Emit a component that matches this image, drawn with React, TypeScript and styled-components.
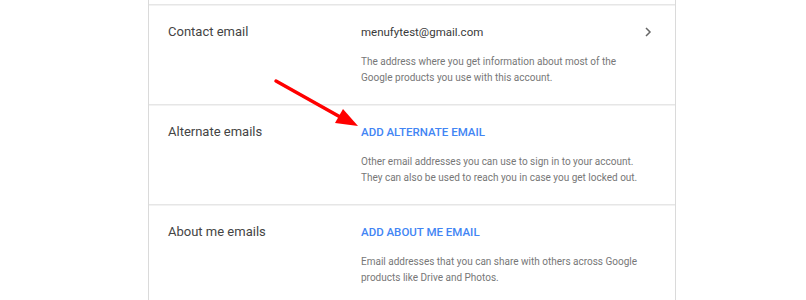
import React from 'react';
import styled, { createGlobalStyle } from 'styled-components';

type EmailRow = {
  label: string;
  value?: string;
  action?: string;
  description: string[];
  chevron?: boolean;
};

const rows: EmailRow[] = [
  {
    label: 'Contact email',
    value: 'menufytest@gmail.com',
    description: [
      'The address where you get information about most of the',
      'Google products you use with this account.',
    ],
    chevron: true,
  },
  {
    label: 'Alternate emails',
    action: 'ADD ALTERNATE EMAIL',
    description: [
      'Other email addresses you can use to sign in to your account.',
      'They can also be used to reach you in case you get locked out.',
    ],
  },
  {
    label: 'About me emails',
    action: 'ADD ABOUT ME EMAIL',
    description: [
      'Email addresses that you can share with others across Google',
      'products like Drive and Photos.',
    ],
  },
];

const GlobalStyle = createGlobalStyle`
  html, body {
    margin: 0;
    background: #fff;
  }
  body {
    font-family: Roboto, 'Liberation Sans', sans-serif;
  }
`;

const Page = styled.div`
  position: relative;
  width: 806px;
  height: 300px;
  overflow: hidden;
  padding-left: 148px;
  box-sizing: border-box;
`;

const Card = styled.section`
  width: 528px;
  border-left: 1px solid #dadada;
  border-right: 1px solid #dadada;
  box-sizing: border-box;
  padding-top: 4px;
`;

const Row = styled.div`
  display: grid;
  grid-template-columns: 193px 1fr 32px;
  height: 100px;
  box-sizing: border-box;
  padding: 17px 0 0 19px;
  border-top: 1px solid #e6e6e6;
  box-shadow: inset 0 1px 0 #f2f2f2;
`;

const Label = styled.div`
  font-size: 13px;
  line-height: 20px;
  color: #444;
`;

const Value = styled.div`
  font-size: 11.5px;
  line-height: 20px;
  color: #3a3a3a;
`;

const Action = styled.a`
  display: block;
  font-size: 11.5px;
  line-height: 20px;
  font-weight: 500;
  color: #4285f4;
  text-decoration: none;
  cursor: pointer;
`;

const Description = styled.p`
  margin: 12px 0 0;
  font-size: 10px;
  line-height: 16px;
  white-space: nowrap;
  color: #777;
`;

const Chevron = styled.div`
  display: flex;
  align-items: flex-start;
  padding-top: 5px;
  color: #666;
`;

const Arrow = styled.svg`
  position: absolute;
  left: 0;
  top: 0;
  pointer-events: none;
`;

const App = () => {
  return (
    <>
      <GlobalStyle />
      <Page>
        <Card>
          {rows.map((row) => (
            <Row key={row.label}>
              <Label>{row.label}</Label>
              <div>
                {row.value ? <Value>{row.value}</Value> : <Action>{row.action}</Action>}
                <Description>
                  {row.description.map((line, i) => (
                    <React.Fragment key={i}>
                      {i > 0 && <br />}
                      {line}
                    </React.Fragment>
                  ))}
                </Description>
              </div>
              <Chevron>
                {row.chevron && (
                  <svg width="10" height="10" viewBox="0 0 10 10">
                    <path d="M3 1 L7 5 L3 9" fill="none" stroke="#666" strokeWidth="1.5" />
                  </svg>
                )}
              </Chevron>
            </Row>
          ))}
        </Card>
        <Arrow width="806" height="300" viewBox="0 0 806 300">
          <line x1="276" y1="81" x2="342" y2="118" stroke="#f00" strokeWidth="3.5" strokeLinecap="round" />
          <polygon points="358,126 335,123 343,109" fill="#f00" />
        </Arrow>
      </Page>
    </>
  );
};

export default App;
